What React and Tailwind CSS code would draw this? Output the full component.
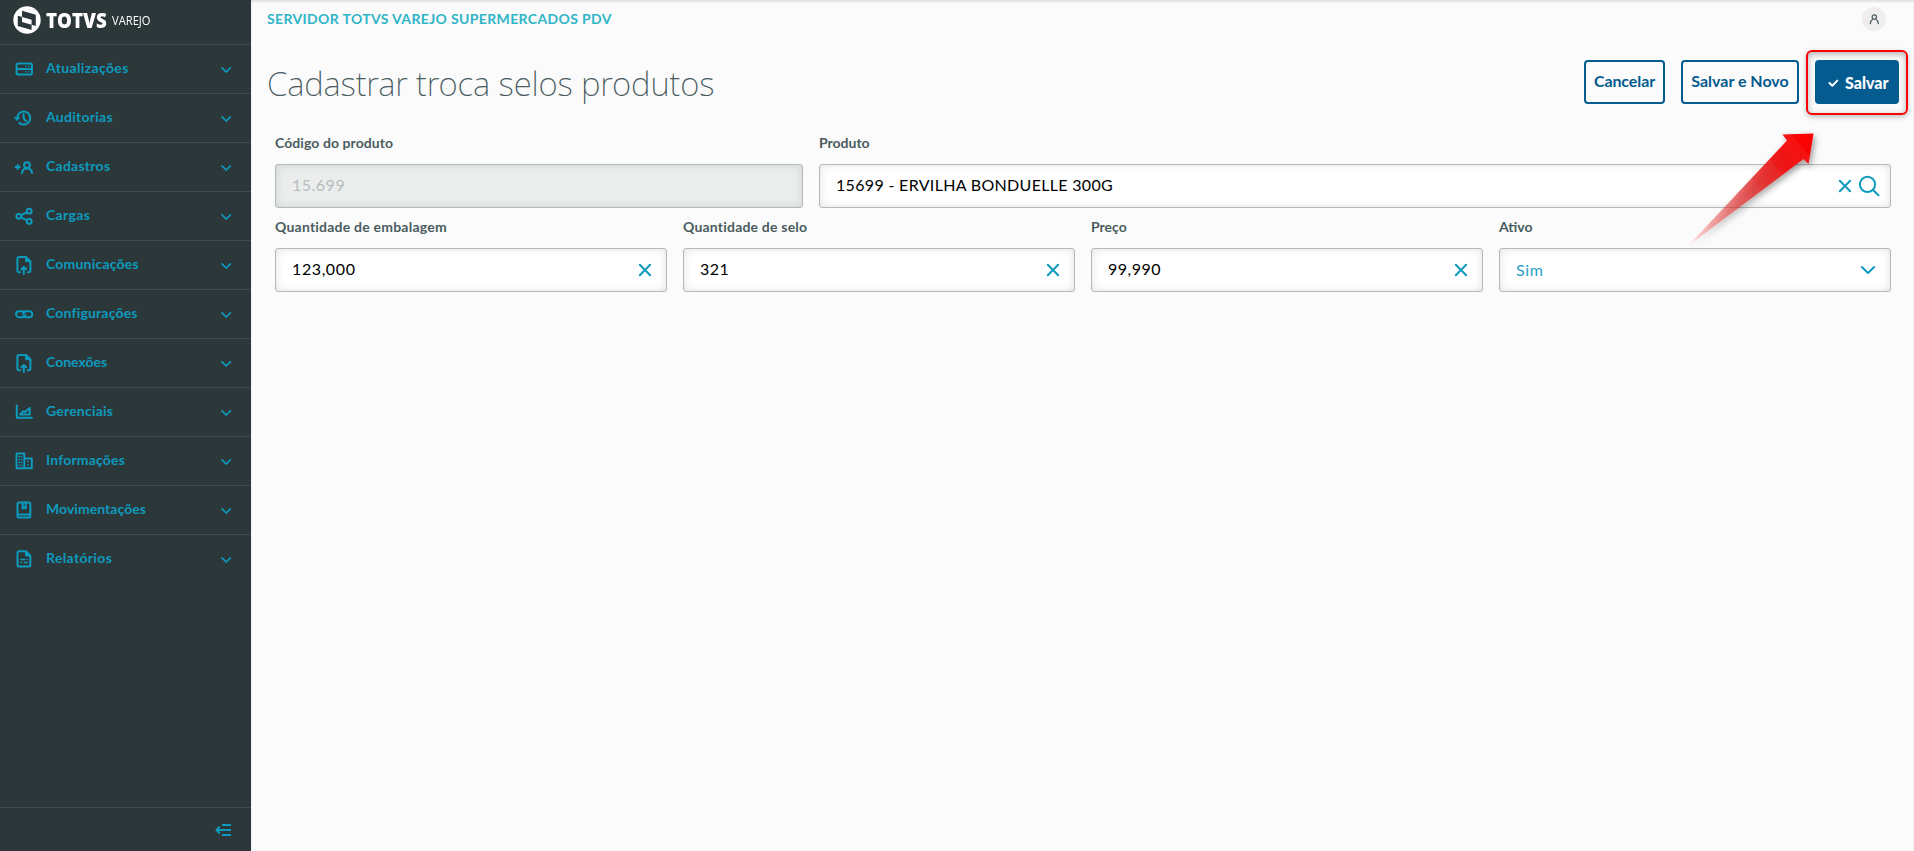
import React from 'react';

const stroke = {
  fill: 'none',
  stroke: 'currentColor',
  strokeWidth: 2,
  strokeLinecap: 'round',
  strokeLinejoin: 'round',
};

function Icon({ children, className = 'w-5 h-5' }) {
  return (
    <svg viewBox="0 0 20 20" className={className} {...stroke}>
      {children}
    </svg>
  );
}

const ServerIcon = () => (
  <Icon>
    <rect x="2.5" y="4.5" width="15.5" height="5.5" rx="1.8" />
    <rect x="2.5" y="10" width="15.5" height="5.5" rx="1.8" />
    <path d="M11.800 7.2h.1M14.600 7.2h.1M11.800 12.8h.1M14.600 12.8h.1" strokeWidth="1.5" />
  </Icon>
);
const HistoryIcon = () => (
  <Icon>
    <path d="M3.300 10.400a6.500 6.500 0 1 1 1.900 4.300" />
    <path d="M.6 9.400h5.200l-2.600 2.800z" fill="currentColor" strokeWidth="1" />
    <path d="M9.600 6.200v4.200l2.400 2.600" />
  </Icon>
);
const AddUserIcon = () => (
  <Icon>
    <path d="M1.600 10h4.200M3.700 7.900v4.200" />
    <circle cx="13" cy="8.100" r="2.900" />
    <path d="M8 16c.3-2.500 1.700-4.600 5-4.800 3.300.2 4.700 2.300 5 4.800" />
  </Icon>
);
const ShareIcon = () => (
  <Icon>
    <circle cx="4.800" cy="10.300" r="2.400" />
    <circle cx="15.200" cy="5.200" r="2.400" />
    <circle cx="15.200" cy="15.400" r="2.400" />
    <path d="M7 9.200l6-2.900M7 11.400l6 2.900" />
  </Icon>
);
const UploadIcon = () => (
  <Icon>
    <path d="M6 17.300H5a1.600 1.600 0 0 1-1.600-1.600V3.700A1.600 1.600 0 0 1 5 2.100h7.200l4.200 4.200v9.400a1.600 1.600 0 0 1-1.600 1.600h-1" />
    <path d="M11.600 2.100v4.600h4.600z" fill="currentColor" strokeWidth="1" />
    <path d="M9.800 18.900v-6.500M7.400 14.300l2.400-2.300 2.400 2.300" />
  </Icon>
);
const LinkIcon = () => (
  <Icon>
    <path d="M11.500 10.900a2.600 2.600 0 0 1-2.200 2.300H5a2.900 2.900 0 0 1 0-5.900h3.300c1.500 0 2 .8 2.400 1.500" />
    <path d="M8.900 9.600a2.600 2.600 0 0 1 2.200-2.300h4.200a2.900 2.900 0 0 1 0 5.900h-3.300c-1.500 0-2-.8-2.400-1.500" />
  </Icon>
);
const ChartIcon = () => (
  <Icon>
    <path d="M2.800 3.600v12.200H18" />
    <path d="M6 12.600l3-3.300 2 .7 4.700-4v6.600z" />
  </Icon>
);
const BuildingIcon = () => (
  <Icon>
    <path d="M2.500 17.300V2.500h7.800v14.800zM10.300 7.500h7.500v9.800H2.500" strokeWidth="1.900" />
    <path
      d="M5.200 5.600h.3M7.500 5.600h.3M5.200 8.500h.3M7.500 8.500h.3M5.200 11.400h.3M7.500 11.400h.3M5.200 14.300h.3M7.500 14.300h.3M14.100 10.500h.2M14.100 13.900h.2"
      strokeWidth="1.600"
    />
  </Icon>
);
const BookIcon = () => (
  <Icon>
    <rect x="3.500" y="2.500" width="12.800" height="15" rx="1.600" />
    <path d="M8.700 2.500v5.900l1.500-1.200 1.500 1.200V2.500M4.500 14.500h10.800" />
  </Icon>
);
const ReportIcon = () => (
  <Icon>
    <path d="M12 2.300H5.100a1.600 1.600 0 0 0-1.600 1.600v12a1.600 1.600 0 0 0 1.600 1.600h9.600a1.600 1.600 0 0 0 1.600-1.600V6.600z" />
    <path d="M11.600 2.500V7h4.500z" fill="currentColor" strokeWidth="1" />
    <path d="M6.800 10.500h4M13 10.500h.2M6.800 13.600h.8M10.400 13.600h2.800" strokeWidth="1.500" />
  </Icon>
);

const menu = [
  ['Atualizações', ServerIcon, 'tracking-[0.36px]'],
  ['Auditorias', HistoryIcon, 'tracking-[0.26px]'],
  ['Cadastros', AddUserIcon, 'tracking-[0.26px]'],
  ['Cargas', ShareIcon, 'tracking-[0.35px]'],
  ['Comunicações', UploadIcon, 'tracking-[0.2px]'],
  ['Configurações', LinkIcon, 'tracking-[0.18px]'],
  ['Conexões', UploadIcon, 'tracking-[0.02px]'],
  ['Gerenciais', ChartIcon, 'tracking-[0.2px]'],
  ['Informações', BuildingIcon, 'tracking-[0.18px]'],
  ['Movimentações', BookIcon, 'tracking-[0.04px]'],
  ['Relatórios', ReportIcon, 'tracking-[0.35px]'],
];

function Logo() {
  return (
    <div className="flex h-11 items-center pl-[13px] pb-1">
      <svg viewBox="0 0 28 28" className="h-7 w-7">
        <circle cx="14" cy="14" r="13.700" fill="#fff" />
        <path
          d="M9 4.800L22.800 8.800V20L9 16zM4.800 9.800L18.600 13.800V24L4.800 20z"
          fill="#2c3739"
          fillRule="evenodd"
        />
      </svg>
      <span className="ml-[5px] w-[61px] origin-left scale-x-[0.89] text-[21px] leading-none font-extrabold text-white font-['Open_Sans']">
        TOTVS
      </span>
      <span className="ml-[5px] origin-left scale-x-[0.86] text-[13px] leading-none text-white font-['Open_Sans']">
        VAREJO
      </span>
    </div>
  );
}

function Sidebar() {
  return (
    <aside className="flex w-[251px] shrink-0 flex-col bg-[#2c3739] text-[#0c9abe]">
      <Logo />
      <nav>
        {menu.map(([label, Glyph, tracking]) => (
          <div key={label} className="flex h-[49px] items-center border-t border-[#3d494b] pl-[14px] pr-[18px]">
            <Glyph />
            <span className={`mb-[2px] ml-3 text-[14px] leading-5 font-bold ${tracking}`}>{label}</span>
            <svg viewBox="0 0 14 14" className="ml-auto mt-px h-[14px] w-[14px]" {...stroke} strokeWidth="1.700">
              <path d="M3 4.800l4.200 4.200 4.200-4.200" />
            </svg>
          </div>
        ))}
      </nav>
      <div className="mt-auto flex h-[44px] items-center justify-end border-t border-[#3d494b] pr-5">
        <svg viewBox="0 0 16 14" className="h-[14px] w-4" fill="none" stroke="currentColor" strokeWidth="1.900">
          <path d="M7 2h9M1.500 7H16M7 12h9M4.800 3.500L1.500 7l3.300 3.500" />
        </svg>
      </div>
    </aside>
  );
}

function CloseIcon() {
  return (
    <svg viewBox="0 0 14 14" className="h-[14px] w-[14px] text-[#0c9abe]" {...stroke} strokeWidth="2">
      <path d="M1.800 1.800l10.400 10.400M12.200 1.800L1.800 12.200" />
    </svg>
  );
}

function Field({ label, labelClass = '', value, valueClass = 'text-black', boxClass = 'bg-white', className = '', children }) {
  return (
    <label className={`flex flex-col ${className}`}>
      <span className={`text-[14px] leading-5 font-bold text-[#4a5c60] ${labelClass}`}>{label}</span>
      <span
        className={`mt-[11px] flex h-11 items-center rounded-[3px] border border-[#b0b9bb] pl-4 shadow-[inset_0_0_8px_rgba(0,0,0,0.12)] ${boxClass}`}
      >
        <span className={`mb-[2px] text-[16px] leading-6 ${valueClass}`}>{value}</span>
        <span className="ml-auto flex items-center">{children}</span>
      </span>
    </label>
  );
}

function Arrow() {
  return (
    <svg viewBox="0 0 150 130" className="pointer-events-none absolute left-[1680px] top-[125px] h-[130px] w-[150px]">
      <defs>
        <linearGradient id="fade" gradientUnits="userSpaceOnUse" x1="9" y1="121" x2="134" y2="9">
          <stop offset="0" stopColor="#f00" stopOpacity="0.05" />
          <stop offset="0.2" stopColor="#e82c2c" stopOpacity="0.4" />
          <stop offset="0.5" stopColor="#e02020" stopOpacity="0.75" />
          <stop offset="0.75" stopColor="#f01010" stopOpacity="0.95" />
          <stop offset="1" stopColor="#f00" />
        </linearGradient>
        <filter id="drop" x="-20%" y="-20%" width="150%" height="150%">
          <feDropShadow dx="2" dy="3" stdDeviation="3" floodColor="#000" floodOpacity="0.4" />
        </filter>
      </defs>
      <path d="M8 121L107 15.500 102.500 9.500 133.500 8.500 128.500 39 123.500 34z" fill="url(#fade)" filter="url(#drop)" />
    </svg>
  );
}

export default function App() {
  return (
    <div className="relative flex h-[851px] w-[1914px] overflow-hidden bg-[#fbfbfb] font-['Lato','Noto_Sans',sans-serif]">
      <Sidebar />
      <main className="flex flex-1 flex-col shadow-[inset_0_2px_2px_rgba(0,0,0,0.1)]">
        <header className="flex h-[38px] items-center justify-between pl-4 pr-7">
          <span className="text-[14px] leading-5 font-bold tracking-[0.36px] text-[#2fb5c7]">
            SERVIDOR TOTVS VAREJO SUPERMERCADOS PDV
          </span>
          <span className="flex h-6 w-6 items-center justify-center rounded-full bg-[#eee]">
            <svg viewBox="0 0 12 12" className="h-3 w-3 text-[#4a5c60]" {...stroke} strokeWidth="1.200">
              <circle cx="6.300" cy="4" r="2.200" />
              <path d="M2.300 10.600c.2-2 1-3.600 2.600-4.700M10.300 10.600c-.2-2-1-3.600-2.600-4.700" />
            </svg>
          </span>
        </header>

        <div className="flex items-start justify-between pl-4 pr-[15px] pt-[22px]">
          <h1 className="pt-0.5 text-[33px] leading-[44px] font-extralight tracking-[-0.16px] text-[#4a5c60] font-['Noto_Sans']">
            Cadastrar troca selos produtos
          </h1>
          <div className="flex gap-4 text-[16px] font-bold text-[#045b8f]">
            <button className="h-11 w-[81px] rounded-[4px] border-2 border-[#045b8f] pb-0.5 tracking-[-0.1px]">Cancelar</button>
            <button className="h-11 w-[118px] rounded-[4px] border-2 border-[#045b8f] pb-0.5">Salvar e Novo</button>
            <button className="relative flex h-11 w-[84px] items-center rounded-[4px] bg-[#045b8f] pl-[13px] pt-px text-white">
              <svg viewBox="0 0 12 12" className="mr-[5px] h-3 w-3" {...stroke}>
                <path d="M1.500 6l2.800 2.800 5-5.200" />
              </svg>
              <span className="font-black">Salvar</span>
              <span className="absolute -left-[9px] -top-[10px] h-[65px] w-[102px] rounded-[6px] border-2 border-[#fb0207] shadow-[0_2px_5px_rgba(0,0,0,0.25),inset_0_2px_6px_rgba(0,0,0,0.3)]" />
            </button>
          </div>
        </div>

        <section className="flex flex-col gap-[9px] pl-6 pr-[23px] pt-[27px]">
          <div className="flex gap-4">
            <Field
              label="Código do produto"
              labelClass="tracking-[0.08px]"
              className="w-[528px]"
              value="15.699"
              valueClass="tracking-[0.5px] text-[#b6bdbf]"
              boxClass="bg-[#ebeded]"
            />
            <Field label="Produto" className="flex-1" value="15699 - ERVILHA BONDUELLE 300G" valueClass="tracking-[0.32px] text-black">
              <CloseIcon />
              <svg viewBox="0 0 22 22" className="ml-[6px] mr-2.5 h-[22px] w-[22px] text-[#0c9abe]" {...stroke} strokeWidth="2">
                <circle cx="9.500" cy="9.300" r="7.600" />
                <path d="M15 15l5.500 5.300" />
              </svg>
            </Field>
          </div>
          <div className="grid grid-cols-4 gap-4">
            <Field label="Quantidade de embalagem" labelClass="tracking-[0.22px]" value="123,000" valueClass="tracking-[0.6px] text-black">
              <span className="mr-3.5"><CloseIcon /></span>
            </Field>
            <Field label="Quantidade de selo" labelClass="tracking-[0.2px]" value="321" valueClass="tracking-[0.5px] text-black">
              <span className="mr-3.5"><CloseIcon /></span>
            </Field>
            <Field label="Preço" value="99,990" valueClass="tracking-[0.5px] text-black">
              <span className="mr-3.5"><CloseIcon /></span>
            </Field>
            <Field label="Ativo" value="Sim" valueClass="tracking-[0.6px] text-[#2d9fc7] pt-0.5">
              <svg viewBox="0 0 16 16" className="mr-3.5 h-4 w-4 text-[#0c9abe]" {...stroke} strokeWidth="2">
                <path d="M1.800 5l6.200 6 6.200-6" />
              </svg>
            </Field>
          </div>
        </section>
      </main>
      <Arrow />
    </div>
  );
}
